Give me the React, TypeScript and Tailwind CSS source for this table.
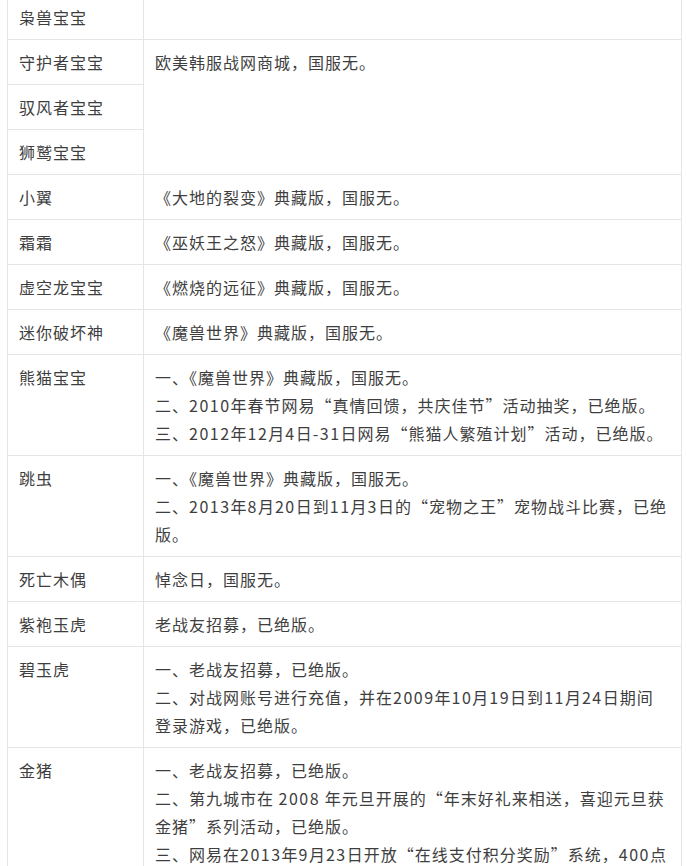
import React from 'react';

type Row = {
  name: string;
  lines?: string[];
  span?: number;
  covered?: boolean;
};

const rows: Row[] = [
  { name: '枭兽宝宝', lines: [] },
  { name: '守护者宝宝', lines: ['欧美韩服战网商城，国服无。'], span: 3 },
  { name: '驭风者宝宝', covered: true },
  { name: '狮鹫宝宝', covered: true },
  { name: '小翼', lines: ['《大地的裂变》典藏版，国服无。'] },
  { name: '霜霜', lines: ['《巫妖王之怒》典藏版，国服无。'] },
  { name: '虚空龙宝宝', lines: ['《燃烧的远征》典藏版，国服无。'] },
  { name: '迷你破坏神', lines: ['《魔兽世界》典藏版，国服无。'] },
  {
    name: '熊猫宝宝',
    lines: [
      '一、《魔兽世界》典藏版，国服无。',
      '二、2010年春节网易“真情回馈，共庆佳节”活动抽奖，已绝版。',
      '三、2012年12月4日-31日网易“熊猫人繁殖计划”活动，已绝版。',
    ],
  },
  {
    name: '跳虫',
    lines: [
      '一、《魔兽世界》典藏版，国服无。',
      '二、2013年8月20日到11月3日的“宠物之王”宠物战斗比赛，已绝',
      '版。',
    ],
  },
  { name: '死亡木偶', lines: ['悼念日，国服无。'] },
  { name: '紫袍玉虎', lines: ['老战友招募，已绝版。'] },
  {
    name: '碧玉虎',
    lines: [
      '一、老战友招募，已绝版。',
      '二、对战网账号进行充值，并在2009年10月19日到11月24日期间',
      '登录游戏，已绝版。',
    ],
  },
  {
    name: '金猪',
    lines: [
      '一、老战友招募，已绝版。',
      '二、第九城市在 2008 年元旦开展的“年末好礼来相送，喜迎元旦获',
      '金猪”系列活动，已绝版。',
      '三、网易在2013年9月23日开放“在线支付积分奖励”系统，400点',
    ],
  },
];

// digits get a little extra room, like the original renderer
function Text({ value }: { value: string }) {
  const parts = value.split(/([0-9\-]+)/);
  return (
    <>
      {parts.map((p, i) =>
        /^[0-9\-]+$/.test(p) ? (
          <span key={i} className="tracking-[1.5px]">
            {p}
          </span>
        ) : (
          <React.Fragment key={i}>{p}</React.Fragment>
        )
      )}
    </>
  );
}

export default function App() {
  return (
    <div className="min-h-screen bg-white">
      <table className="mt-[-6px] ml-[7px] w-[675px] table-fixed border-collapse text-[16px] leading-[28px] tracking-[1px] text-[#3e3e3e] font-['Noto_Sans_CJK_SC','Microsoft_YaHei',sans-serif]">
        <colgroup>
          <col className="w-[136px]" />
          <col />
        </colgroup>
        <tbody>
          {rows.map((row) => (
            <tr key={row.name}>
              <td className="border border-[#e5e5e5] px-[11px] py-2 align-top whitespace-nowrap">
                {row.name}
              </td>
              {!row.covered && (
                <td
                  rowSpan={row.span}
                  className="border border-[#e5e5e5] px-[11px] py-2 align-top whitespace-nowrap"
                >
                  {row.lines?.map((line, i) => (
                    <div key={i}>
                      <Text value={line} />
                    </div>
                  ))}
                </td>
              )}
            </tr>
          ))}
        </tbody>
      </table>
    </div>
  );
}
